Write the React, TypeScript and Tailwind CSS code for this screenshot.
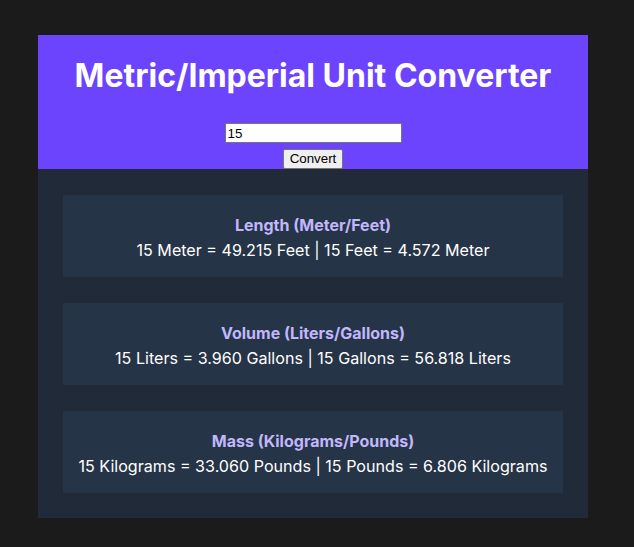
import React, { useState } from "react";

const conversions = [
  {
    title: "Length (Meter/Feet)",
    text: "15 Meter = 49.215 Feet | 15 Feet = 4.572 Meter",
  },
  {
    title: "Volume (Liters/Gallons)",
    text: "15 Liters = 3.960 Gallons | 15 Gallons = 56.818 Liters",
  },
  {
    title: "Mass (Kilograms/Pounds)",
    text: "15 Kilograms = 33.060 Pounds | 15 Pounds = 6.806 Kilograms",
  },
];

const App: React.FC = () => {
  const [value, setValue] = useState("15");

  return (
    <div className="min-h-screen bg-[#1b1b1b] pt-[35px] pl-[38px] font-['Inter',sans-serif]">
      <div className="w-[550px]">
        <header className="bg-[#6c44fe] pt-[21px] flex flex-col items-center">
          <h1 className="text-[32px] leading-[39px] font-bold text-white">
            Metric/Imperial Unit Converter
          </h1>
          <input
            type="text"
            value={value}
            onChange={(e) => setValue(e.target.value)}
            className="mt-[28px] w-[177px] h-[20px] bg-white border border-[#767676] px-[2px] text-[13.33px] text-black font-['Liberation_Sans',Arial,sans-serif] outline-none"
          />
          <button className="mt-[6px] h-[20px] px-[6px] bg-[#efefef] border border-[#767676] rounded-[2px] text-[13.33px] leading-none text-black font-['Liberation_Sans',Arial,sans-serif]">
            Convert
          </button>
        </header>
        <main className="bg-[#212a38] px-[25px] pt-[26px] pb-[25px] flex flex-col gap-[26px]">
          {conversions.map((item, index) => (
            <div
              key={index}
              className="bg-[#263447] h-[82px] pt-[20px] flex flex-col items-center text-center"
            >
              <h3 className="text-[16px] leading-[20px] font-bold text-[#c1b7fb]">
                {item.title}
              </h3>
              <p className="mt-[5px] text-[16.1px] leading-[20px] text-white">
                {item.text}
              </p>
            </div>
          ))}
        </main>
      </div>
    </div>
  );
};

export default App;
